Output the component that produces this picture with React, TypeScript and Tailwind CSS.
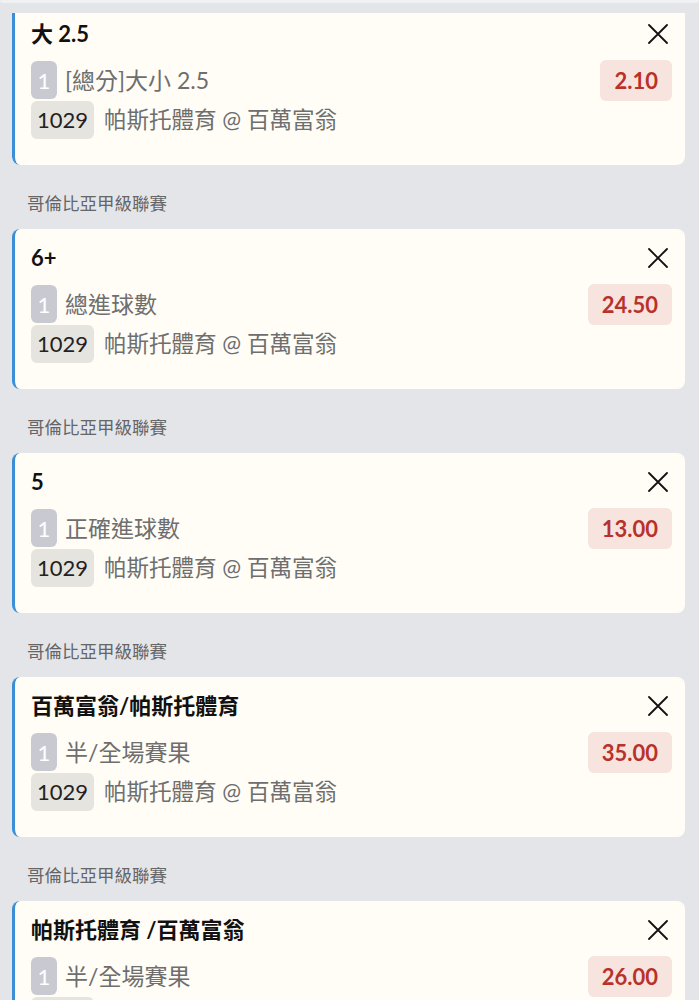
import React from "react";

type Bet = {
  league?: string;
  title: string;
  market: string;
  odds: string;
};

const bets: Bet[] = [
  { title: "大 2.5", market: "[總分]大小 2.5", odds: "2.10" },
  { league: "哥倫比亞甲級聯賽", title: "6+", market: "總進球數", odds: "24.50" },
  { league: "哥倫比亞甲級聯賽", title: "5", market: "正確進球數", odds: "13.00" },
  { league: "哥倫比亞甲級聯賽", title: "百萬富翁/帕斯托體育", market: "半/全場賽果", odds: "35.00" },
  { league: "哥倫比亞甲級聯賽", title: "帕斯托體育 /百萬富翁", market: "半/全場賽果", odds: "26.00" },
];

const font = { fontFamily: "Lato, 'Noto Sans CJK TC', sans-serif" };

function XIcon() {
  return (
    <svg width="20" height="20" viewBox="0 0 20 20" className="mr-[4px] shrink-0">
      <path d="M1 1 L19 19 M19 1 L1 19" stroke="#111" strokeWidth="1.8" strokeLinecap="round" fill="none" />
    </svg>
  );
}

function Card({ bet }: { bet: Bet }) {
  return (
    <div className="rounded-[8px] border-l-[3px] border-[#3b8fd6] bg-[#fffdf6] pl-[16px] pr-[13px] pt-[15px] pb-[26px]">
      <div className="flex h-[28px] items-center justify-between">
        <span className="text-[22px] font-bold leading-[28px] text-[#111]">{bet.title}</span>
        <XIcon />
      </div>
      <div className="mt-[12px] flex h-[40px] items-center justify-between">
        <div className="flex items-center">
          <span className="flex h-[38px] w-[26px] items-center justify-center rounded-[6px] bg-[#c9c9d2] text-[22px] text-white">1</span>
          <span className="ml-[8px] text-[23px] text-[#6e6e6e]">{bet.market}</span>
        </div>
        <span className="flex h-[41px] items-center rounded-[6px] bg-[#f8e4de] px-[14px] text-[22px] font-bold text-[#b8322c]">
          {bet.odds}
        </span>
      </div>
      <div className="flex h-[39px] items-center">
        <span className="flex h-[38px] items-center rounded-[6px] bg-[#e6e4df] px-[6px] text-[22px] text-[#222]">1029</span>
        <span className="ml-[10px] text-[22.5px] text-[#6e6e6e]">帕斯托體育 @ 百萬富翁</span>
      </div>
    </div>
  );
}

export default function App() {
  return (
    <div className="min-h-[1000px] w-[699px] overflow-hidden bg-[#e4e5e9]" style={font}>
      <div className="h-[3px] rounded-b-[6px] bg-[#f0f1f3]" />
      <div className="h-[10px]" />
      {bets.map((b, i) =>
        i === 0 ? (
          <div key={i} className="ml-[12px] mr-[14px] overflow-hidden rounded-b-[8px]">
            <div className="-mt-[8px]">
              <Card bet={b} />
            </div>
          </div>
        ) : (
          <div key={i}>
            <div className="pl-[27px] pt-[27px] pb-[13px] text-[17.5px] leading-[24px] text-[#666]">{b.league}</div>
            <div className="ml-[12px] mr-[14px]">
              <Card bet={b} />
            </div>
          </div>
        )
      )}
    </div>
  );
}
